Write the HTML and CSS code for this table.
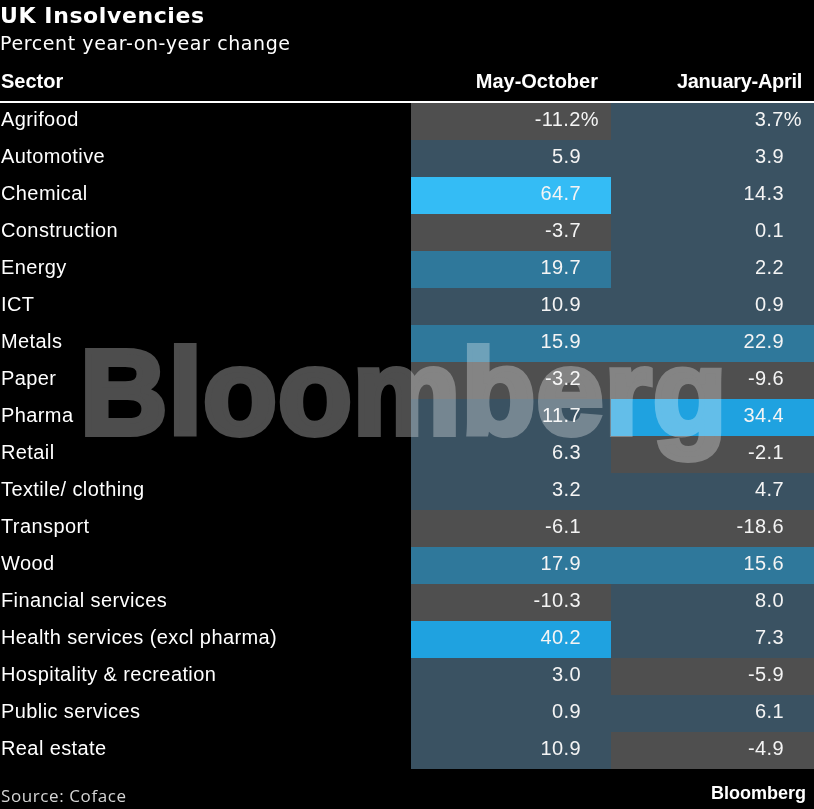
FILE: index.html
```html
<!DOCTYPE html>
<html lang="en">
<head>
<meta charset="utf-8">
<title>UK Insolvencies</title>
<link rel="stylesheet" href="styles.css">
</head>
<body>
<div class="chart">
  <h1 class="title">UK Insolvencies</h1>
  <p class="subtitle">Percent year-on-year change</p>
  <div class="table">
    <div class="row head">
      <div class="c-name">Sector</div>
      <div class="c-h">May-October</div>
      <div class="c-h">January-April</div>
    </div>
    <div class="row"><div class="c-name">Agrifood</div><div class="v gray">-11.2<span class="pct">%</span></div><div class="v slate">3.7<span class="pct">%</span></div></div>
    <div class="row"><div class="c-name">Automotive</div><div class="v slate">5.9</div><div class="v slate">3.9</div></div>
    <div class="row"><div class="c-name">Chemical</div><div class="v bright">64.7</div><div class="v slate">14.3</div></div>
    <div class="row"><div class="c-name">Construction</div><div class="v gray">-3.7</div><div class="v slate">0.1</div></div>
    <div class="row"><div class="c-name">Energy</div><div class="v mid">19.7</div><div class="v slate">2.2</div></div>
    <div class="row"><div class="c-name">ICT</div><div class="v slate">10.9</div><div class="v slate">0.9</div></div>
    <div class="row"><div class="c-name">Metals</div><div class="v mid">15.9</div><div class="v mid">22.9</div></div>
    <div class="row"><div class="c-name">Paper</div><div class="v gray">-3.2</div><div class="v gray">-9.6</div></div>
    <div class="row"><div class="c-name">Pharma</div><div class="v slate">11.7</div><div class="v blue">34.4</div></div>
    <div class="row"><div class="c-name">Retail</div><div class="v slate">6.3</div><div class="v gray">-2.1</div></div>
    <div class="row"><div class="c-name">Textile/ clothing</div><div class="v slate">3.2</div><div class="v slate">4.7</div></div>
    <div class="row"><div class="c-name">Transport</div><div class="v gray">-6.1</div><div class="v gray">-18.6</div></div>
    <div class="row"><div class="c-name">Wood</div><div class="v mid">17.9</div><div class="v mid">15.6</div></div>
    <div class="row"><div class="c-name">Financial services</div><div class="v gray">-10.3</div><div class="v slate">8.0</div></div>
    <div class="row"><div class="c-name">Health services (excl pharma)</div><div class="v blue">40.2</div><div class="v slate">7.3</div></div>
    <div class="row"><div class="c-name">Hospitality &amp; recreation</div><div class="v slate">3.0</div><div class="v gray">-5.9</div></div>
    <div class="row"><div class="c-name">Public services</div><div class="v slate">0.9</div><div class="v slate">6.1</div></div>
    <div class="row"><div class="c-name">Real estate</div><div class="v slate">10.9</div><div class="v gray">-4.9</div></div>
  </div>
  <div class="footer">
    <span class="source">Source: Coface</span>
    <span class="logo">Bloomberg</span>
  </div>
  <div class="watermark" aria-hidden="true">Bloomberg</div>
</div>
</body>
</html>
```
FILE: styles.css
```css
html, body {
  margin: 0;
  padding: 0;
  background: #000;
}
.chart {
  position: relative;
  width: 814px;
  height: 809px;
  overflow: hidden;
  background: #000;
  color: #fff;
  font-family: "Liberation Sans", Arial, sans-serif;
}
.title {
  margin: 0;
  font-family: "DejaVu Sans", Verdana, sans-serif;
  font-weight: bold;
  font-size: 22px;
  letter-spacing: 0.6px;
  line-height: 31px;
  color: #fff;
}
.subtitle {
  margin: 0;
  font-family: "DejaVu Sans", Verdana, sans-serif;
  font-size: 19px;
  letter-spacing: 0.6px;
  line-height: 24px;
  color: #fff;
}
.table {
  display: flex;
  flex-direction: column;
}
.row {
  display: grid;
  grid-template-columns: 411px 200px 203px;
  height: 37px;
  align-items: stretch;
  font-size: 20px;
  letter-spacing: 0.4px;
}
.row > div {
  display: flex;
  align-items: center;
  line-height: 33px;
  padding-bottom: 4px;
  box-sizing: border-box;
}
.row.head {
  height: auto;
  padding-top: 14px;
  padding-bottom: 8px;
  border-bottom: 2px solid #fff;
  font-weight: bold;
  letter-spacing: 0;
}
.row.head > div {
  line-height: 24px;
  padding-bottom: 0;
}
.c-name {
  padding-left: 1px;
}
.c-h {
  justify-content: flex-end;
  padding-right: 13px;
}
.row.head .c-h:last-child {
  padding-right: 12px;
  letter-spacing: -0.3px;
}
.v {
  justify-content: flex-end;
  padding-right: 30px;
  color: #f4f4f4;
}
.pct {
  margin-right: -18px;
}
.gray { background: #4f4f4f; }
.slate { background: #3a5262; }
.mid { background: #2f789b; }
.bright { background: #34bcf5; }
.blue { background: #1fa2e0; }
.footer {
  display: flex;
  justify-content: space-between;
  align-items: flex-start;
  padding-right: 8px;
}
.source {
  margin-top: 17px;
  padding-left: 1px;
  font-family: "Open Sans", sans-serif;
  font-size: 17px;
  letter-spacing: 0.6px;
  line-height: 20px;
  color: #d4d4d4;
}
.logo {
  margin-top: 14px;
  font-family: "Liberation Sans", Arial, sans-serif;
  font-weight: bold;
  font-size: 18px;
  line-height: 20px;
  color: #fff;
}
.watermark {
  position: absolute;
  left: 80px;
  top: 332px;
  font-family: "Liberation Sans", Arial, sans-serif;
  font-weight: bold;
  font-size: 121px;
  line-height: 1;
  letter-spacing: 1px;
  color: #4d4d4d;
  -webkit-text-stroke: 6px #4d4d4d;
  mix-blend-mode: screen;
  pointer-events: none;
  white-space: nowrap;
}
```
